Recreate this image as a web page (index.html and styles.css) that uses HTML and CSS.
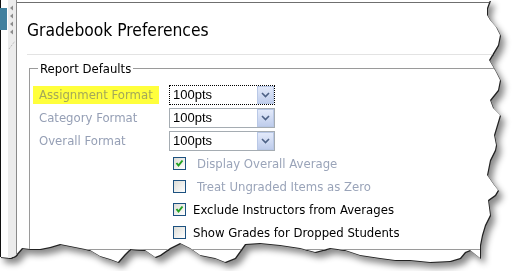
FILE: index.html
```html
<!DOCTYPE html>
<html lang="en">
<head>
    <meta charset="UTF-8">
    <meta name="viewport" content="width=device-width, initial-scale=1.0">
    <title>Gradebook Preferences</title>
    <link rel="stylesheet" href="styles.css">
</head>
<body>
    <div class="shadow">
        <div class="sheet">
            <div class="rail">
                <div class="rail-tab"></div>
            </div>
            <div class="rail-bar">
                <svg width="8" height="52" viewBox="0 0 8 52">
                    <path d="M2 8 L5 5.5 L5 10.5 Z" fill="#8c8c8c"/>
                    <path d="M2 16 L5 13.5 L5 18.5 Z" fill="#8c8c8c"/>
                    <path d="M2 24 L5 21.5 L5 26.5 Z" fill="#8c8c8c"/>
                    <path d="M2 32 L5 29.5 L5 34.5 Z" fill="#8c8c8c"/>
                    <path d="M1 49 L7 41" stroke="#b0b0b0" stroke-width="1" stroke-dasharray="1 1"/>
                </svg>
            </div>
            <div class="main">
                <h1>Gradebook Preferences</h1>
                <fieldset class="defaults">
                    <legend>Report Defaults</legend>
                    <div class="row">
                        <label class="field-label"><span class="highlight">Assignment Format</span></label>
                        <div class="select focus">
                            <span class="select-text">100pts</span>
                            <span class="select-btn"><svg width="9" height="6" viewBox="0 0 9 6"><path d="M1 1 L4.5 4.5 L8 1" fill="none" stroke="#4d6185" stroke-width="1.6"/></svg></span>
                        </div>
                    </div>
                    <div class="row">
                        <label class="field-label"><span class="plain">Category Format</span></label>
                        <div class="select">
                            <span class="select-text">100pts</span>
                            <span class="select-btn"><svg width="9" height="6" viewBox="0 0 9 6"><path d="M1 1 L4.5 4.5 L8 1" fill="none" stroke="#4d6185" stroke-width="1.6"/></svg></span>
                        </div>
                    </div>
                    <div class="row">
                        <label class="field-label"><span class="plain">Overall Format</span></label>
                        <div class="select">
                            <span class="select-text">100pts</span>
                            <span class="select-btn"><svg width="9" height="6" viewBox="0 0 9 6"><path d="M1 1 L4.5 4.5 L8 1" fill="none" stroke="#4d6185" stroke-width="1.6"/></svg></span>
                        </div>
                    </div>
                    <div class="checks">
                        <div class="check-row disabled">
                            <span class="box"><svg width="11" height="11" viewBox="0 0 11 11"><path d="M2.5 5 L4.5 7.5 L8.5 2.5" fill="none" stroke="#21a121" stroke-width="2"/></svg></span>
                            <span class="check-label">Display Overall Average</span>
                        </div>
                        <div class="check-row disabled">
                            <span class="box"></span>
                            <span class="check-label">Treat Ungraded Items as Zero</span>
                        </div>
                        <div class="check-row">
                            <span class="box"><svg width="11" height="11" viewBox="0 0 11 11"><path d="M2.5 5 L4.5 7.5 L8.5 2.5" fill="none" stroke="#21a121" stroke-width="2"/></svg></span>
                            <span class="check-label">Exclude Instructors from Averages</span>
                        </div>
                        <div class="check-row">
                            <span class="box"></span>
                            <span class="check-label">Show Grades for Dropped Students</span>
                        </div>
                    </div>
                </fieldset>
            </div>
        </div>
    </div>
</body>
</html>
```

FILE: styles.css
```css
body {
    margin: 0;
    background: #ffffff;
    font-family: "DejaVu Sans Condensed", "DejaVu Sans", sans-serif;
}
.shadow {
    width: 514px;
    height: 271px;
    filter: drop-shadow(1px 1px 0 #222) drop-shadow(4px 5px 3px rgba(0, 0, 0, 0.45));
}
.sheet {
    display: flex;
    width: 502px;
    height: 264px;
    background: #ffffff;
    clip-path: polygon(0 0, 490px 0, 487px 8px, 487px 15px, 490px 20px, 496px 27px, 500px 35px, 498px 45px, 492px 55px, 489px 60px, 492px 65px, 496px 72px, 500px 80px, 498px 90px, 490px 100px, 493px 108px, 500px 115px, 497px 125px, 494px 135px, 496px 145px, 495px 150px, 490px 160px, 487px 175px, 494px 185px, 498px 190px, 495px 195px, 488px 200px, 490px 215px, 485px 225px, 482px 235px, 480px 245px, 480px 258px, 470px 250px, 465px 252px, 460px 258px, 450px 261px, 430px 262px, 410px 260px, 395px 260px, 380px 258px, 360px 255px, 345px 250px, 330px 248px, 315px 252px, 300px 248px, 280px 245px, 260px 243px, 245px 244px, 235px 258px, 225px 262px, 215px 258px, 200px 255px, 190px 248px, 180px 243px, 170px 248px, 160px 255px, 155px 257px, 145px 250px, 130px 249px, 125px 254px, 118px 262px, 110px 259px, 100px 256px, 90px 250px, 80px 248px, 70px 246px, 60px 244px, 50px 247px, 40px 249px, 30px 249px, 22px 248px, 15px 256px, 10px 258px, 0 257px);
}
.rail {
    width: 7px;
    border-left: 1px solid #111;
    padding-top: 8px;
}
.rail-tab {
    height: 22px;
    margin-left: -1px;
    width: 7px;
    background: #41809e;
}
.rail-bar {
    width: 8px;
    background: #ececec;
    border-right: 1px solid #8a8a8a;
}
.main {
    flex: 1;
    margin-top: 2px;
    border-top: 1px solid #6f6f6f;
    padding-left: 10px;
}
h1 {
    margin: 0;
    padding-top: 14px;
    height: 37px;
    font-size: 17.3px;
    font-weight: normal;
    color: #000;
    border-bottom: 1px solid #e3e3e3;
    line-height: 26px;
}
.defaults {
    margin: 6px 0 0 2px;
    padding: 9px 0 0 3px;
    height: 178px;
    border: 1px solid #9a9a9a;
}
legend {
    padding: 0 2px;
    margin-left: 5px;
    font-size: 13px;
    color: #000;
}
.row {
    display: flex;
    align-items: center;
    height: 20px;
    margin-bottom: 3px;
}
.field-label {
    width: 136px;
    font-size: 13px;
}
.highlight {
    display: inline-block;
    background: #ffff3c;
    color: #a3a859;
    padding: 1px 6px;
    line-height: 16px;
}
.plain {
    display: inline-block;
    color: #959fb5;
    padding: 1px 6px;
    line-height: 16px;
}
.select {
    display: flex;
    width: 104px;
    height: 18px;
    border: 1px solid #a5acb2;
}
.select.focus {
    border: 1px dotted #000;
}
.select-text {
    flex: 1;
    padding-left: 3px;
    font-family: "Liberation Sans", sans-serif;
    font-size: 13px;
    line-height: 18px;
    color: #000;
}
.select-btn {
    display: flex;
    align-items: center;
    justify-content: center;
    width: 15px;
    margin: 0 0 0 1px;
    border: 1px solid #b9c8e6;
    background: linear-gradient(#e3eafa, #bfcdec);
}
.checks {
    margin-top: -1px;
}
.check-row {
    display: flex;
    align-items: center;
    height: 20px;
    margin: 0 0 3px 140px;
}
.box {
    display: flex;
    align-items: center;
    justify-content: center;
    width: 11px;
    height: 11px;
    border: 1px solid #1c5180;
    background: linear-gradient(135deg, #dcdcd6, #ffffff);
}
.check-label {
    margin-left: 7px;
    font-size: 13px;
    color: #000;
}
.disabled .check-label {
    margin-left: 11px;
    color: #9aa4b9;
}
```
